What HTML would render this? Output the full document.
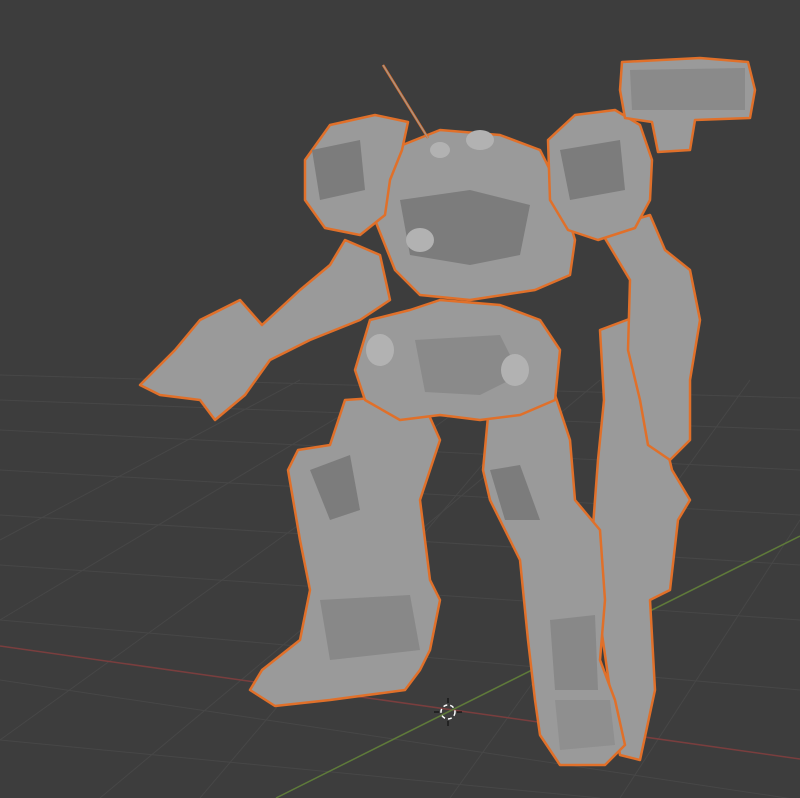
<!DOCTYPE html>
<html><head><style>
html,body{margin:0;padding:0;background:#3d3d3d;width:800px;height:798px;overflow:hidden}
svg{display:block}
</style></head><body>
<svg width="800" height="798" viewBox="0 0 800 798" xmlns="http://www.w3.org/2000/svg">
<rect width="800" height="798" fill="#3d3d3d"/>
<g stroke="#474747" stroke-width="1">
<line x1="0" y1="430" x2="800" y2="470"/>
<line x1="0" y1="470" x2="800" y2="515"/>
<line x1="0" y1="515" x2="800" y2="565"/>
<line x1="0" y1="565" x2="800" y2="620"/>
<line x1="0" y1="620" x2="800" y2="690"/>
<line x1="0" y1="680" x2="800" y2="800"/>
<line x1="0" y1="740" x2="600" y2="798"/>
<line x1="0" y1="400" x2="800" y2="430"/>
<line x1="0" y1="375" x2="800" y2="398"/>
<line x1="100" y1="798" x2="600" y2="380"/>
<line x1="0" y1="740" x2="500" y2="380"/>
<line x1="0" y1="620" x2="400" y2="380"/>
<line x1="0" y1="540" x2="300" y2="380"/>
<line x1="450" y1="798" x2="750" y2="380"/>
<line x1="620" y1="798" x2="800" y2="520"/>
<line x1="200" y1="798" x2="520" y2="420"/>
</g>
<line x1="0" y1="646" x2="800" y2="759" stroke="#7a3e3e" stroke-width="1.5"/>
<line x1="276" y1="798" x2="800" y2="536" stroke="#5e7a3a" stroke-width="1.5"/>
<g fill="#9a9a9a" stroke="#e0702a" stroke-width="2.5" stroke-linejoin="round">
<!-- rifle -->
<path d="M600 330 L632 318 L650 330 L660 420 L672 470 L690 500 L678 520 L670 590 L650 600 L655 690 L640 760 L620 755 L610 690 L600 620 L592 540 L598 460 L604 400 Z"/>
<!-- right arm -->
<path d="M600 230 L650 215 L665 250 L690 270 L700 320 L690 380 L690 440 L670 460 L648 445 L640 400 L628 350 L630 280 Z"/>
<!-- left arm and gun -->
<path d="M345 240 L380 255 L390 300 L360 320 L310 340 L270 360 L245 395 L215 420 L200 400 L160 395 L140 385 L175 350 L200 320 L240 300 L262 325 L300 290 L330 265 Z"/>
<!-- left leg -->
<path d="M345 400 L420 395 L440 440 L420 500 L430 580 L440 600 L430 650 L420 670 L405 690 L330 700 L275 706 L250 690 L262 670 L300 640 L310 590 L300 540 L288 470 L298 450 L330 445 Z"/>
<!-- right leg -->
<path d="M490 395 L555 395 L570 440 L575 500 L600 530 L605 600 L600 660 L615 700 L625 745 L605 765 L560 765 L540 735 L535 700 L528 640 L520 560 L490 500 L483 470 Z"/>
<!-- pelvis -->
<path d="M370 320 L410 310 L440 300 L500 305 L540 320 L560 350 L555 400 L520 415 L480 420 L440 415 L400 420 L365 400 L355 370 Z"/>
<!-- torso -->
<path d="M390 150 L440 130 L500 135 L540 150 L560 190 L575 240 L570 275 L535 290 L470 300 L420 295 L395 270 L375 220 L372 180 Z"/>
<!-- left shoulder -->
<path d="M305 160 L330 125 L375 115 L408 122 L402 150 L390 180 L385 215 L360 235 L325 228 L305 200 Z"/>
<!-- right shoulder -->
<path d="M548 140 L575 115 L615 110 L640 125 L652 160 L650 200 L635 228 L598 240 L568 230 L550 200 Z"/>
<!-- missile pod -->
<path d="M622 62 L700 58 L748 62 L755 90 L750 118 L695 120 L690 150 L658 152 L652 122 L625 118 L620 90 Z"/>
</g>
<line x1="383" y1="65" x2="428" y2="138" stroke="#e0702a" stroke-width="2.5"/>
<line x1="383" y1="65" x2="428" y2="138" stroke="#999" stroke-width="1"/>
<g fill="#7c7c7c">
<path d="M400 200 L470 190 L530 205 L520 255 L470 265 L410 255 Z"/>
<path d="M415 340 L500 335 L520 375 L480 395 L425 392 Z" fill="#8a8a8a"/>
<path d="M310 470 L350 455 L360 510 L330 520 Z"/>
<path d="M490 470 L520 465 L540 520 L505 520 Z"/>
<path d="M320 600 L410 595 L420 650 L330 660 Z" fill="#888"/>
<path d="M550 620 L595 615 L598 690 L555 690 Z" fill="#888"/>
<path d="M555 700 L610 700 L615 745 L560 750 Z" fill="#8f8f8f"/>
<path d="M312 150 L360 140 L365 190 L320 200 Z"/>
<path d="M560 150 L620 140 L625 190 L570 200 Z"/>
<path d="M630 70 L745 68 L745 110 L632 110 Z" fill="#8a8a8a"/>
</g>
<g fill="#b2b2b2">
<ellipse cx="420" cy="240" rx="14" ry="12"/>
<ellipse cx="380" cy="350" rx="14" ry="16"/>
<ellipse cx="515" cy="370" rx="14" ry="16"/>
<ellipse cx="480" cy="140" rx="14" ry="10"/>
<ellipse cx="440" cy="150" rx="10" ry="8"/>
</g>
<g stroke="#fff" stroke-width="1.5" fill="none">
<circle cx="448" cy="712" r="7" stroke-dasharray="4 3"/>
</g>
<g stroke="#111" stroke-width="1.2">
<line x1="448" y1="698" x2="448" y2="703"/><line x1="448" y1="721" x2="448" y2="726"/>
<line x1="434" y1="712" x2="439" y2="712"/><line x1="457" y1="712" x2="462" y2="712"/>
</g>
</svg>
</body></html>
